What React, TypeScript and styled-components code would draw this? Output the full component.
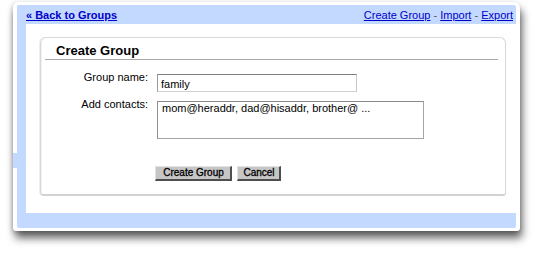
import React, { FC } from "react";
import styled, { createGlobalStyle } from "styled-components";

const GlobalStyle = createGlobalStyle`
  html, body {
    margin: 0;
    padding: 0;
    background: #fff;
  }
  body {
    font-family: "Liberation Sans", Arial, sans-serif;
    font-size: 11px;
    color: #000;
  }
`;

const StyledPage = styled.div`
  width: 534px;
  height: 254px;
  padding: 2px 0 0 13px;
  box-sizing: border-box;
  overflow: hidden;
`;

const StyledWindow = styled.div`
  position: relative;
  width: 507px;
  height: 229px;
  box-sizing: border-box;
  padding: 3px 4px 3px 4px;
  background: #fff;
  border-radius: 5px 6px 3px 3px;
  box-shadow: 2px 7px 9px rgba(0, 0, 0, 0.62), -1px 1px 4px rgba(0, 0, 0, 0.18);
`;

const StyledNotch = styled.span`
  position: absolute;
  left: 0;
  top: 151px;
  width: 4px;
  height: 15px;
  background: #c3d9ff;
`;

const StyledPanel = styled.div`
  display: flex;
  flex-direction: column;
  height: 100%;
  padding: 0 0 15px 9px;
  box-sizing: border-box;
  background: #c3d9ff;
  border-radius: 1px 2px 2px 2px;
`;

const StyledTopBar = styled.div`
  display: flex;
  align-items: center;
  justify-content: space-between;
  height: 20px;
  padding-right: 3px;
`;

const StyledLink = styled.a<{ $bold?: boolean }>`
  color: #0000cc;
  text-decoration: underline;
  font-weight: ${(p) => (p.$bold ? "bold" : "normal")};
  cursor: pointer;
`;

const StyledSep = styled.span`
  color: #555;
`;

const StyledInner = styled.div`
  flex: 1;
  background: #fff;
  padding: 13px 10px 17px 14px;
`;

const StyledCard = styled.div`
  border: 1px solid #d8d8d8;
  border-bottom: 2px solid #d2d2d2;
  border-radius: 6px 6px 3px 4px;
  box-shadow: -1px 0 0 #eeeeee, inset 1px 0 0 #f2f2f2;
  padding: 0 0 13px 0;
`;

const StyledTitle = styled.h2`
  margin: 4px 7px 0 4px;
  padding-left: 11px;
  height: 17px;
  line-height: 17px;
  font-size: 13px;
  font-weight: bold;
  border-bottom: 1px solid #a8a8a8;
`;

const StyledForm = styled.div`
  display: grid;
  grid-template-columns: 107px auto;
  column-gap: 9px;
  row-gap: 9px;
  margin-top: 14px;
  align-items: start;
`;

const StyledLabel = styled.label`
  text-align: right;
  margin-top: -3px;
  line-height: 13px;
`;

const StyledInput = styled.input`
  width: 200px;
  height: 18px;
  box-sizing: border-box;
  margin: 0;
  padding: 2px 3px 1px;
  border: 1px solid;
  border-color: #7e7e7e #c6c6c6 #d0d0d0 #9c9c9c;
  font: 11px/13px "Liberation Sans", Arial, sans-serif;
  color: #000;
  outline: none;
`;

const StyledTextArea = styled.textarea`
  width: 267px;
  height: 38px;
  box-sizing: border-box;
  margin: 0;
  padding: 0 4px;
  border: 1px solid;
  border-color: #8a8a8a #a4a4a4 #a4a4a4 #8e8e8e;
  font: 11px/12px "Liberation Sans", Arial, sans-serif;
  color: #000;
  resize: none;
  overflow: hidden;
  outline: none;
  display: block;
`;

const StyledButtons = styled.div`
  grid-column: 2;
  display: flex;
  gap: 5px;
  margin: 18px 0 0 -2px;
`;

const StyledButton = styled.button<{ $width: number }>`
  width: ${(p) => p.$width}px;
  height: 15px;
  box-sizing: border-box;
  margin: 0;
  padding: 0 4px 0 5px;
  background: #c6c6c6;
  border-style: solid;
  border-width: 1px 2px 2px 1px;
  border-color: #e2e2e2 #4e4e4e #4e4e4e #e2e2e2;
  font: 10px/12px "Liberation Sans", Arial, sans-serif;
  -webkit-text-stroke: 0.3px #000;
  color: #000;
  cursor: pointer;
`;

const App: FC = () => {
  return (
    <StyledPage>
      <GlobalStyle />
      <StyledWindow>
        <StyledNotch />
        <StyledPanel>
          <StyledTopBar>
            <StyledLink $bold>« Back to Groups</StyledLink>
            <span>
              <StyledLink>Create Group</StyledLink>
              <StyledSep> - </StyledSep>
              <StyledLink>Import</StyledLink>
              <StyledSep> - </StyledSep>
              <StyledLink>Export</StyledLink>
            </span>
          </StyledTopBar>
          <StyledInner>
            <StyledCard>
              <StyledTitle>Create Group</StyledTitle>
              <StyledForm>
                <StyledLabel>Group name:</StyledLabel>
                <StyledInput defaultValue="family" />
                <StyledLabel>Add contacts:</StyledLabel>
                <StyledTextArea defaultValue="mom@heraddr, dad@hisaddr, brother@ ..." />
                <StyledButtons>
                  <StyledButton $width={77}>Create Group</StyledButton>
                  <StyledButton $width={44}>Cancel</StyledButton>
                </StyledButtons>
              </StyledForm>
            </StyledCard>
          </StyledInner>
        </StyledPanel>
      </StyledWindow>
    </StyledPage>
  );
};

export default App;
